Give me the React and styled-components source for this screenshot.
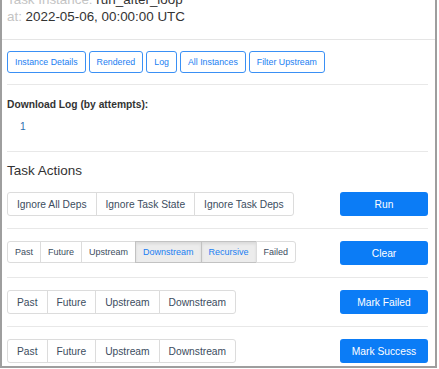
import React from "react"
import styled, { createGlobalStyle } from "styled-components"

const Global = createGlobalStyle`
  html, body {
    margin: 0;
    padding: 0;
    background: #fff;
    font-family: "Liberation Sans", Arial, sans-serif;
  }
`

const Modal = styled.div`
  width: 437px;
  height: 368px;
  box-sizing: border-box;
  border: 2px solid #9e9e9e;
  border-top: none;
  overflow: hidden;
  background: #fff;
`

const Header = styled.div`
  margin-top: -9px;
  padding: 0 5px;
  height: 49px;
  border-bottom: 1px solid #e5e5e5;
  box-sizing: border-box;
  font-size: 13.4px;
  line-height: 17px;
`

const Line = styled.div`
  color: #333;
  white-space: nowrap;
`

const Label = styled.span`
  color: #c4c4c4;
`

const Body = styled.div`
  padding: 11px 7px 0 5px;
`

const LinkRow = styled.div`
  display: flex;
  gap: 3px;
`

const OutlineButton = styled.button`
  height: 22px;
  box-sizing: border-box;
  padding: 0 7px;
  border: 1px solid #3a90f5;
  border-radius: 3px;
  background: #fff;
  color: #1a7ef2;
  font-family: inherit;
  font-size: 8.8px;
  cursor: pointer;
`

const Rule = styled.hr`
  border: none;
  border-top: 1px solid #e8e8e8;
  margin: ${p => p.$gap || "12px"} 0;
`

const SubTitle = styled.div`
  font-weight: bold;
  font-size: 10.25px;
  line-height: 13px;
  color: #333;
  margin-top: 13px;
`

const Attempt = styled.a`
  display: block;
  margin: 9px 0 0 13px;
  font-size: 10.25px;
  line-height: 13px;
  color: #2f6fb0;
  text-decoration: none;
`

const Heading = styled.h4`
  margin: 0 0 13px;
  font-weight: normal;
  font-size: 13.5px;
  line-height: 16px;
  color: #333;
`

const ActionRow = styled.div`
  display: flex;
  justify-content: space-between;
  align-items: flex-start;
  height: 24px;
`

const Group = styled.div`
  display: flex;
`

const GroupButton = styled.button`
  height: ${p => (p.$small ? "22px" : "24px")};
  box-sizing: border-box;
  padding: 0 ${p => (p.$small ? "7px" : "9px")};
  margin-left: -1px;
  border: 1px solid ${p => (p.$active ? "#c2c2c2" : "#dcdcdc")};
  background: ${p => (p.$active ? "#ececec" : "#fff")};
  box-shadow: ${p => (p.$active ? "inset 0 2px 3px rgba(0,0,0,.08)" : "none")};
  color: ${p => (p.$active ? "#1a7ef2" : "#3c4d60")};
  font-family: inherit;
  font-size: ${p => (p.$small ? "9px" : "10.25px")};
  cursor: pointer;

  &:first-child {
    margin-left: 0;
    border-radius: 3px 0 0 3px;
  }
  &:last-child {
    border-radius: 0 3px 3px 0;
  }
`

const PrimaryButton = styled.button`
  width: 88px;
  height: 24px;
  border: none;
  border-radius: 3px;
  background: #0b7cf6;
  color: #fff;
  font-family: inherit;
  font-size: 10.25px;
  cursor: pointer;
`

const links = ["Instance Details", "Rendered", "Log", "All Instances", "Filter Upstream"]

const actions = [
  { label: "Run", small: false, opts: ["Ignore All Deps", "Ignore Task State", "Ignore Task Deps"] },
  { label: "Clear", small: true, opts: ["Past", "Future", "Upstream", "Downstream", "Recursive", "Failed"], active: ["Downstream", "Recursive"] },
  { label: "Mark Failed", small: false, opts: ["Past", "Future", "Upstream", "Downstream"] },
  { label: "Mark Success", small: false, opts: ["Past", "Future", "Upstream", "Downstream"] },
]

export default function App() {
  return (
    <>
      <Global />
      <Modal>
        <Header>
          <Line><Label>Task Instance: </Label>run_after_loop</Line>
          <Line><Label>at: </Label>2022-05-06, 00:00:00 UTC</Line>
        </Header>
        <Body>
          <LinkRow>
            {links.map(l => <OutlineButton key={l}>{l}</OutlineButton>)}
          </LinkRow>
          <Rule $gap="11px" />
          <SubTitle>Download Log (by attempts):</SubTitle>
          <Attempt href="#">1</Attempt>
          <Rule $gap="18px 0 11px" />
          <Heading>Task Actions</Heading>
          {actions.map((a, i) => (
            <React.Fragment key={a.label}>
              {i > 0 && <Rule />}
              <ActionRow>
                <Group>
                  {a.opts.map(o => (
                    <GroupButton key={o} $small={a.small} $active={a.active && a.active.includes(o)}>
                      {o}
                    </GroupButton>
                  ))}
                </Group>
                <PrimaryButton>{a.label}</PrimaryButton>
              </ActionRow>
            </React.Fragment>
          ))}
        </Body>
      </Modal>
    </>
  )
}
